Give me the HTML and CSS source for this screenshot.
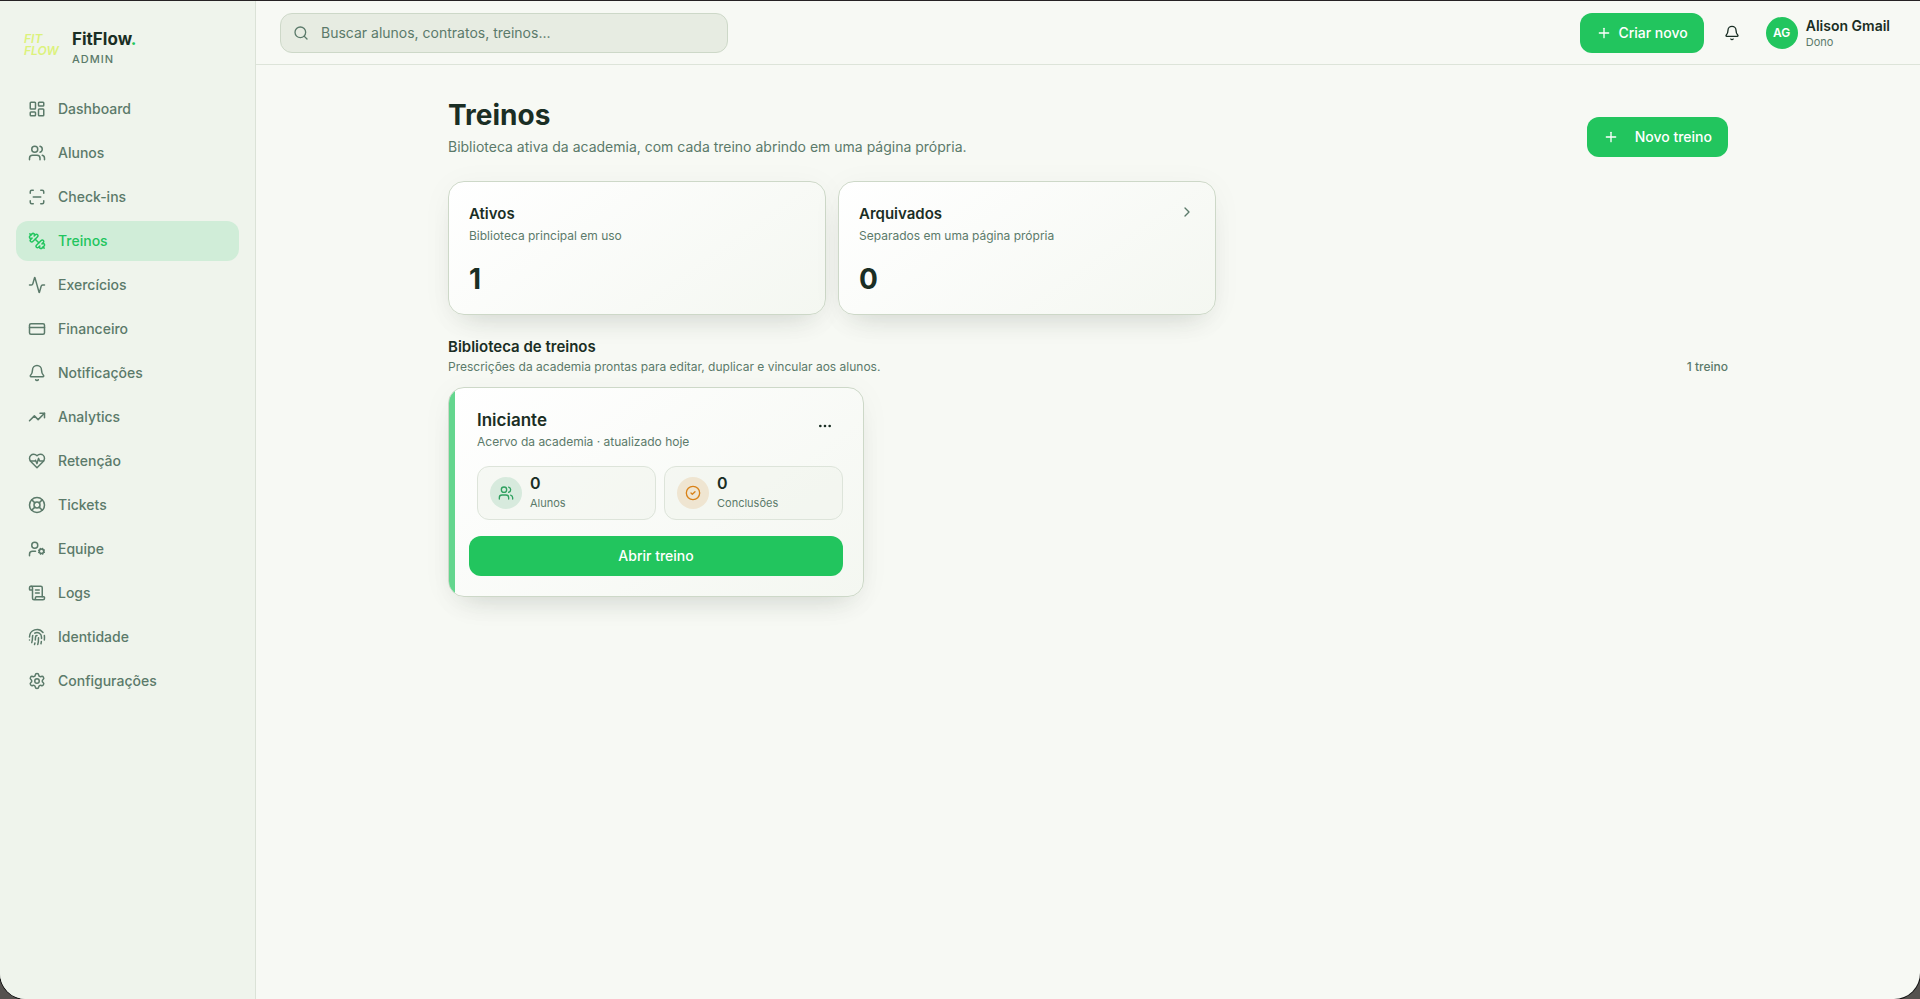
FILE: index.html
```html
<!DOCTYPE html>
<html lang="pt-BR">
<head>
    <meta charset="UTF-8">
    <meta name="viewport" content="width=device-width, initial-scale=1.0">
    <title>Treinos - FitFlow Admin</title>
    <link rel="stylesheet" href="styles.css">
</head>
<body>
    <div class="app">
        <aside class="sidebar">
            <div class="brand">
                <div class="brand-logo">FIT<br>FLOW</div>
                <div>
                    <div class="brand-name">FitFlow<span>.</span></div>
                    <div class="brand-role">ADMIN</div>
                </div>
            </div>
            <nav class="nav">
                <a href="#"><svg class="icon" viewBox="0 0 24 24"><rect width="7" height="9" x="3" y="3" rx="1"/><rect width="7" height="5" x="14" y="3" rx="1"/><rect width="7" height="9" x="14" y="12" rx="1"/><rect width="7" height="5" x="3" y="16" rx="1"/></svg>Dashboard</a>
                <a href="#"><svg class="icon" viewBox="0 0 24 24"><path d="M16 21v-2a4 4 0 0 0-4-4H6a4 4 0 0 0-4 4v2"/><circle cx="9" cy="7" r="4"/><path d="M22 21v-2a4 4 0 0 0-3-3.87"/><path d="M16 3.13a4 4 0 0 1 0 7.75"/></svg>Alunos</a>
                <a href="#"><svg class="icon" viewBox="0 0 24 24"><path d="M3 7V5a2 2 0 0 1 2-2h2"/><path d="M17 3h2a2 2 0 0 1 2 2v2"/><path d="M21 17v2a2 2 0 0 1-2 2h-2"/><path d="M7 21H5a2 2 0 0 1-2-2v-2"/><path d="M7 12h10"/></svg>Check-ins</a>
                <a href="#" class="active" aria-current="page"><svg class="icon" viewBox="0 0 24 24"><path d="M14.4 14.4 9.6 9.6"/><path d="M18.657 21.485a2 2 0 1 1-2.829-2.828l-1.767 1.768a2 2 0 1 1-2.829-2.829l6.364-6.364a2 2 0 1 1 2.829 2.829l-1.768 1.767a2 2 0 1 1 2.828 2.829z"/><path d="m21.5 21.5-1.4-1.4"/><path d="M3.9 3.9 2.5 2.5"/><path d="M6.404 12.768a2 2 0 1 1-2.829-2.829l1.768-1.767a2 2 0 1 1-2.828-2.829l2.828-2.828a2 2 0 1 1 2.829 2.828l1.767-1.768a2 2 0 1 1 2.829 2.829z"/></svg>Treinos</a>
                <a href="#"><svg class="icon" viewBox="0 0 24 24"><path d="M22 12h-2.48a2 2 0 0 0-1.93 1.46l-2.35 8.36a.25.25 0 0 1-.48 0L9.24 2.18a.25.25 0 0 0-.48 0l-2.35 8.36A2 2 0 0 1 4.49 12H2"/></svg>Exercícios</a>
                <a href="#"><svg class="icon" viewBox="0 0 24 24"><rect width="20" height="14" x="2" y="5" rx="2"/><path d="M2 10h20"/></svg>Financeiro</a>
                <a href="#"><svg class="icon" viewBox="0 0 24 24"><path d="M10.268 21a2 2 0 0 0 3.464 0"/><path d="M3.262 15.326A1 1 0 0 0 4 17h16a1 1 0 0 0 .74-1.673C19.41 13.956 18 12.499 18 8A6 6 0 0 0 6 8c0 4.499-1.411 5.956-2.738 7.326"/></svg>Notificações</a>
                <a href="#"><svg class="icon" viewBox="0 0 24 24"><path d="M16 7h6v6"/><path d="m22 7-8.5 8.5-5-5L2 17"/></svg>Analytics</a>
                <a href="#"><svg class="icon" viewBox="0 0 24 24"><path d="M19 14c1.49-1.46 3-3.21 3-5.5A5.5 5.5 0 0 0 16.5 3c-1.76 0-3 .5-4.5 2-1.5-1.5-2.74-2-4.5-2A5.5 5.5 0 0 0 2 8.5c0 2.3 1.5 4.05 3 5.5l7 7Z"/><path d="M3.22 12H9.5l.5-1 2 4.5 2-7 1.5 3.5h5.27"/></svg>Retenção</a>
                <a href="#"><svg class="icon" viewBox="0 0 24 24"><circle cx="12" cy="12" r="10"/><path d="m4.93 4.93 4.24 4.24"/><path d="m14.83 9.17 4.24-4.24"/><path d="m14.83 14.83 4.24 4.24"/><path d="m9.17 14.83-4.24 4.24"/><circle cx="12" cy="12" r="4"/></svg>Tickets</a>
                <a href="#"><svg class="icon" viewBox="0 0 24 24"><path d="M10 15H6a4 4 0 0 0-4 4v2"/><circle cx="9" cy="7" r="4"/><circle cx="18" cy="15" r="3"/><path d="m21.7 16.4-.9-.3"/><path d="m15.2 13.9-.9-.3"/><path d="m16.6 18.7.3-.9"/><path d="m19.1 12.2.3-.9"/><path d="m19.6 18.7-.4-1"/><path d="m16.8 12.3-.4-1"/><path d="m14.3 16.6 1-.4"/><path d="m20.7 13.8 1-.4"/></svg>Equipe</a>
                <a href="#"><svg class="icon" viewBox="0 0 24 24"><path d="M15 12h-5"/><path d="M15 8h-5"/><path d="M19 17V5a2 2 0 0 0-2-2H4"/><path d="M8 21h12a2 2 0 0 0 2-2v-1a1 1 0 0 0-1-1H11a1 1 0 0 0-1 1v1a2 2 0 1 1-4 0V5a2 2 0 1 0-4 0v2a1 1 0 0 0 1 1h3"/></svg>Logs</a>
                <a href="#"><svg class="icon" viewBox="0 0 24 24"><path d="M12 10a2 2 0 0 0-2 2c0 1.02-.1 2.51-.26 4"/><path d="M14 13.12c0 2.38 0 6.38-1 8.88"/><path d="M17.29 21.02c.12-.6.43-2.3.5-3.02"/><path d="M2 12a10 10 0 0 1 18-6"/><path d="M2 16h.01"/><path d="M21.8 16c.2-2 .131-5.354 0-6"/><path d="M5 19.5C5.5 18 6 15 6 12a6 6 0 0 1 .34-2"/><path d="M8.65 22c.21-.66.45-1.32.57-2"/><path d="M9 6.8a6 6 0 0 1 9 5.2v2"/></svg>Identidade</a>
                <a href="#"><svg class="icon" viewBox="0 0 24 24"><path d="M9.671 4.136a2.34 2.34 0 0 1 4.659 0 2.34 2.34 0 0 0 3.319 1.915 2.34 2.34 0 0 1 2.33 4.033 2.34 2.34 0 0 0 0 3.831 2.34 2.34 0 0 1-2.33 4.033 2.34 2.34 0 0 0-3.319 1.915 2.34 2.34 0 0 1-4.659 0 2.34 2.34 0 0 0-3.32-1.915 2.34 2.34 0 0 1-2.33-4.033 2.34 2.34 0 0 0 0-3.831A2.34 2.34 0 0 1 6.35 6.051a2.34 2.34 0 0 0 3.319-1.915"/><circle cx="12" cy="12" r="3"/></svg>Configurações</a>
            </nav>
        </aside>

        <div class="page">
            <header class="topbar">
                <label class="search">
                    <svg class="icon icon-sm" viewBox="0 0 24 24"><circle cx="11" cy="11" r="8"/><path d="m21 21-4.3-4.3"/></svg>
                    <input type="search" placeholder="Buscar alunos, contratos, treinos..." aria-label="Buscar">
                </label>
                <div class="topbar-actions">
                    <button class="btn btn-create"><svg class="icon icon-sm" viewBox="0 0 24 24"><path d="M5 12h14"/><path d="M12 5v14"/></svg>Criar novo</button>
                    <button class="btn-icon btn-bell" aria-label="Notificações"><svg class="icon icon-sm" viewBox="0 0 24 24"><path d="M10.268 21a2 2 0 0 0 3.464 0"/><path d="M3.262 15.326A1 1 0 0 0 4 17h16a1 1 0 0 0 .74-1.673C19.41 13.956 18 12.499 18 8A6 6 0 0 0 6 8c0 4.499-1.411 5.956-2.738 7.326"/></svg></button>
                    <button class="user">
                        <span class="avatar">AG</span>
                        <span class="user-info">
                            <span class="user-name">Alison Gmail</span>
                            <span class="user-role">Dono</span>
                        </span>
                    </button>
                </div>
            </header>

            <main class="content">
                <div class="page-header">
                    <div>
                        <h1>Treinos</h1>
                        <p>Biblioteca ativa da academia, com cada treino abrindo em uma página própria.</p>
                    </div>
                    <button class="btn btn-new"><svg class="icon icon-sm" viewBox="0 0 24 24"><path d="M5 12h14"/><path d="M12 5v14"/></svg>Novo treino</button>
                </div>

                <div class="summary">
                    <div class="card summary-card">
                        <h2>Ativos</h2>
                        <p>Biblioteca principal em uso</p>
                        <strong>1</strong>
                    </div>
                    <a href="#" class="card summary-card">
                        <div class="summary-top">
                            <h2>Arquivados</h2>
                            <svg class="icon icon-sm" viewBox="0 0 24 24"><path d="m9 18 6-6-6-6"/></svg>
                        </div>
                        <p>Separados em uma página própria</p>
                        <strong>0</strong>
                    </a>
                </div>

                <section class="library">
                    <div class="library-header">
                        <div>
                            <h2>Biblioteca de treinos</h2>
                            <p>Prescrições da academia prontas para editar, duplicar e vincular aos alunos.</p>
                        </div>
                        <span class="count">1 treino</span>
                    </div>

                    <div class="workouts">
                        <article class="card workout">
                            <div class="workout-header">
                                <div>
                                    <h3>Iniciante</h3>
                                    <p>Acervo da academia · atualizado hoje</p>
                                </div>
                                <button class="btn-icon btn-more" aria-label="Mais opções"><svg class="icon icon-sm" viewBox="0 0 24 24"><circle cx="12" cy="12" r="1"/><circle cx="19" cy="12" r="1"/><circle cx="5" cy="12" r="1"/></svg></button>
                            </div>
                            <div class="stats">
                                <div class="stat">
                                    <span class="stat-icon green"><svg class="icon icon-sm" viewBox="0 0 24 24"><path d="M16 21v-2a4 4 0 0 0-4-4H6a4 4 0 0 0-4 4v2"/><circle cx="9" cy="7" r="4"/><path d="M22 21v-2a4 4 0 0 0-3-3.87"/><path d="M16 3.13a4 4 0 0 1 0 7.75"/></svg></span>
                                    <div>
                                        <div class="stat-value">0</div>
                                        <div class="stat-label">Alunos</div>
                                    </div>
                                </div>
                                <div class="stat">
                                    <span class="stat-icon orange"><svg class="icon icon-sm" viewBox="0 0 24 24"><circle cx="12" cy="12" r="10"/><path d="m9 12 2 2 4-4"/></svg></span>
                                    <div>
                                        <div class="stat-value">0</div>
                                        <div class="stat-label">Conclusões</div>
                                    </div>
                                </div>
                            </div>
                            <button class="btn btn-open">Abrir treino</button>
                        </article>
                    </div>
                </section>
            </main>
        </div>
    </div>
</body>
</html>
```
FILE: styles.css
```css
* {
    box-sizing: border-box;
    margin: 0;
    padding: 0;
}

body {
    font-family: Inter, "Liberation Sans", sans-serif;
    font-size: 14px;
    line-height: 20px;
    color: #1a2e24;
    background-color: #55524f;
}

a {
    color: inherit;
    text-decoration: none;
}

button {
    font: inherit;
    color: inherit;
    background: none;
    border: none;
    cursor: pointer;
}

.app {
    display: flex;
    min-height: 100vh;
    border-top: 1px solid #262224;
    border-radius: 0 0 26px 26px;
    box-shadow: 0 0 0 1px #111;
    background-color: #f7f9f4;
    overflow: hidden;
}

.icon {
    width: 18px;
    height: 18px;
    flex-shrink: 0;
    fill: none;
    stroke: currentColor;
    stroke-width: 2;
    stroke-linecap: round;
    stroke-linejoin: round;
}

.icon-sm {
    width: 16px;
    height: 16px;
}

/* Sidebar */
.sidebar {
    width: 256px;
    flex-shrink: 0;
    background-color: #eff4ec;
    border-right: 1px solid #dbe2d7;
}

.brand {
    display: flex;
    align-items: flex-start;
    gap: 12px;
    padding: 28px 24px 20px;
}

.brand-logo {
    width: 36px;
    padding-top: 4px;
    font-size: 12px;
    font-weight: 600;
    font-style: italic;
    line-height: 12px;
    color: #dcf27c;
}

.brand-name {
    font-size: 17px;
    font-weight: 700;
    line-height: 20px;
}

.brand-name span {
    color: #22c55e;
}

.brand-role {
    font-size: 11px;
    font-weight: 500;
    line-height: 20px;
    letter-spacing: 1px;
    color: #5b7a6a;
}

.nav {
    display: flex;
    flex-direction: column;
    gap: 4px;
    padding: 0 16px;
}

.nav a {
    display: flex;
    align-items: center;
    gap: 12px;
    height: 40px;
    padding: 0 12px;
    border-radius: 12px;
    font-weight: 500;
    color: #5b7a6a;
}

.nav a.active {
    color: #22c55e;
    background-color: #d0edd8;
}

/* Topbar */
.page {
    flex: 1;
    min-width: 0;
}

.topbar {
    display: flex;
    align-items: center;
    justify-content: space-between;
    height: 64px;
    padding: 0 24px;
    border-bottom: 1px solid #dde4d9;
}

.search {
    display: flex;
    align-items: center;
    gap: 12px;
    width: 448px;
    height: 40px;
    padding: 0 12px;
    border: 1px solid #cdd8c8;
    border-radius: 12px;
    background-color: #e7ece2;
    color: #5b7a6a;
}

.search input {
    flex: 1;
    border: none;
    outline: none;
    background: none;
    font: inherit;
    color: #1a2e24;
}

.search input::placeholder {
    color: #5b7a6a;
}

.topbar-actions {
    display: flex;
    align-items: center;
    gap: 8px;
}

.btn {
    display: flex;
    align-items: center;
    justify-content: center;
    height: 40px;
    padding: 0 16px;
    border-radius: 12px;
    font-weight: 500;
    color: #fff;
    background-color: #22c55e;
}

.btn-create {
    gap: 6px;
}

.btn-new {
    gap: 16px;
}

.btn-icon {
    display: flex;
    align-items: center;
    justify-content: center;
}

.btn-bell {
    width: 40px;
    height: 40px;
}

.user {
    display: flex;
    align-items: center;
    gap: 8px;
    padding: 0 6px;
    text-align: left;
}

.avatar {
    display: flex;
    align-items: center;
    justify-content: center;
    width: 32px;
    height: 32px;
    border-radius: 50%;
    font-size: 12px;
    font-weight: 600;
    color: #fff;
    background-color: #22c55e;
}

.user-info {
    display: flex;
    flex-direction: column;
}

.user-name {
    font-weight: 600;
    line-height: 18px;
}

.user-role {
    font-size: 11px;
    line-height: 14px;
    color: #5b7a6a;
}

/* Content */
.content {
    max-width: 1328px;
    margin: 0 auto;
    padding: 32px 24px;
}

.content p {
    color: #5b7a6a;
}

.page-header {
    display: flex;
    align-items: flex-end;
    justify-content: space-between;
}

.page-header h1 {
    margin-bottom: 4px;
    font-size: 28px;
    font-weight: 700;
    line-height: 36px;
}

.card {
    border: 1px solid #cdd8c8;
    border-radius: 16px;
    background: linear-gradient(145deg, #fff, #f4f7f1);
    box-shadow: 0 16px 28px -16px rgba(26, 46, 36, 0.18), 0 4px 32px rgba(26, 46, 36, 0.04);
}

.summary {
    display: grid;
    grid-template-columns: 1fr 1fr;
    gap: 12px;
    max-width: 768px;
    margin-top: 24px;
}

.summary-card {
    padding: 20px;
}

.summary-top {
    display: flex;
    justify-content: space-between;
}

.summary-top .icon {
    color: #5b7a6a;
    margin: 2px 0;
}

.summary-card h2,
.library-header h2 {
    font-size: 15px;
    font-weight: 600;
    line-height: 24px;
}

.summary-card p,
.library-header p,
.workout-header p {
    font-size: 12px;
    line-height: 16px;
}

.summary-card p {
    margin-top: 2px;
}

.summary-card strong {
    display: block;
    margin-top: 20px;
    font-size: 28px;
    font-weight: 700;
    line-height: 30px;
}

.library {
    margin-top: 20px;
}

.library-header {
    display: flex;
    align-items: flex-end;
    justify-content: space-between;
    margin-bottom: 12px;
}

.count {
    font-size: 12px;
    font-weight: 500;
    line-height: 16px;
    color: #5b7a6a;
}

.workouts {
    display: grid;
    grid-template-columns: repeat(3, 1fr);
    gap: 16px;
}

.workout {
    position: relative;
    padding: 20px;
    overflow: hidden;
}

/* green accent on the left edge */
.workout::before {
    content: "";
    position: absolute;
    top: 0;
    bottom: 0;
    left: 0;
    width: 6px;
    background-color: #64d68e;
}

.workout-header {
    display: flex;
    justify-content: space-between;
    align-items: flex-start;
    padding-left: 8px;
}

.workout-header h3 {
    font-size: 17px;
    font-weight: 600;
    line-height: 24px;
    margin-bottom: 2px;
}

.btn-more {
    width: 36px;
    height: 36px;
}

.stats {
    display: grid;
    grid-template-columns: 1fr 1fr;
    gap: 8px;
    margin: 16px 0;
    padding-left: 8px;
}

.stat {
    display: flex;
    align-items: center;
    gap: 8px;
    height: 54px;
    padding: 0 12px;
    border: 1px solid #dde4da;
    border-radius: 12px;
    background-color: rgba(239, 244, 236, 0.5);
}

.stat-icon {
    display: flex;
    align-items: center;
    justify-content: center;
    width: 32px;
    height: 32px;
    border-radius: 50%;
}

.stat-icon.green {
    color: #2fa05f;
    background-color: #d7eadd;
}

.stat-icon.orange {
    color: #d98218;
    background-color: #efe5d1;
}

.stat-value {
    font-size: 16px;
    font-weight: 600;
    line-height: 20px;
}

.stat-label {
    font-size: 11px;
    line-height: 20px;
    color: #5b7a6a;
}

.btn-open {
    width: 100%;
}
```
